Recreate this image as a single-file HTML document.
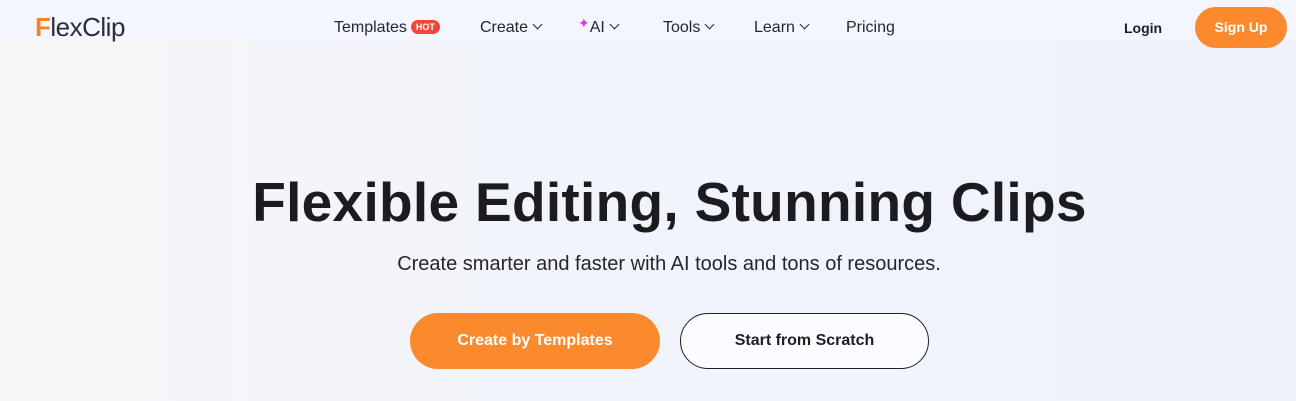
<!DOCTYPE html>
<html><head><style>
*{margin:0;padding:0;box-sizing:border-box}
body{width:1296px;height:401px;overflow:hidden;background:linear-gradient(90deg,#f7f6f8 0%,#f2f4fb 40%,#eef2fd 100%);font-family:"Liberation Sans",sans-serif;color:#1d1f24;position:relative}
.nav{position:absolute;top:0;left:0;right:0;height:40px;background:#f3f6fe}
.logo{position:absolute;left:35px;top:12px;font-size:26px;color:#2b2e36;letter-spacing:-0.5px;line-height:30px}
.logo b{color:#f58428;font-weight:bold}
.item{position:absolute;top:19px;font-size:16px;color:#25272c}
.chev{display:inline-block;width:7px;height:7px;border-right:1.8px solid #25272c;border-bottom:1.8px solid #25272c;transform:rotate(45deg);margin-left:6px;position:relative;top:-4px}
.hot{display:inline-block;background:#f4453b;color:#fff;font-size:9px;font-weight:bold;border-radius:8px;padding:2px 5px;margin-left:4px;vertical-align:2px}
.login{position:absolute;left:1124px;top:20px;font-size:14px;font-weight:bold}
.sign{position:absolute;left:1195px;top:7px;width:92px;height:41px;border-radius:21px;background:#fb8a2e;color:#fff;font-weight:bold;font-size:14px;text-align:center;line-height:41px}
h1{position:absolute;top:170px;left:0;width:1339px;text-align:center;font-size:55px;font-weight:bold;color:#1a1c20;letter-spacing:0.3px}
p{position:absolute;top:253px;left:0;width:1338px;text-align:center;font-size:20px;color:#25272c}
.b1{position:absolute;left:410px;top:313px;width:250px;height:56px;border-radius:28px;background:#fb8a2e;color:#fff;font-weight:bold;font-size:16px;text-align:center;line-height:56px}
.b2{position:absolute;left:680px;top:313px;width:249px;height:56px;border-radius:28px;border:1.5px solid #1d1f24;background:#fbfcff;font-weight:bold;font-size:16px;text-align:center;line-height:53px}
</style></head><body>
<div class="nav"></div>
<div class="logo"><b>F</b>lexClip</div>
<div class="item" style="left:334px">Templates<span class="hot">HOT</span></div>
<div class="item" style="left:480px">Create<span class="chev"></span></div>
<div class="item" style="left:578px"><span style="color:#d63af0;font-size:14px;position:relative;top:-4px">✦</span>AI<span class="chev"></span></div>
<div class="item" style="left:663px">Tools<span class="chev"></span></div>
<div class="item" style="left:754px">Learn<span class="chev"></span></div>
<div class="item" style="left:846px">Pricing</div>
<div class="login">Login</div>
<div class="sign">Sign Up</div>
<h1>Flexible Editing, Stunning Clips</h1>
<p>Create smarter and faster with AI tools and tons of resources.</p>
<div class="b1">Create by Templates</div>
<div class="b2">Start from Scratch</div>
</body></html>
